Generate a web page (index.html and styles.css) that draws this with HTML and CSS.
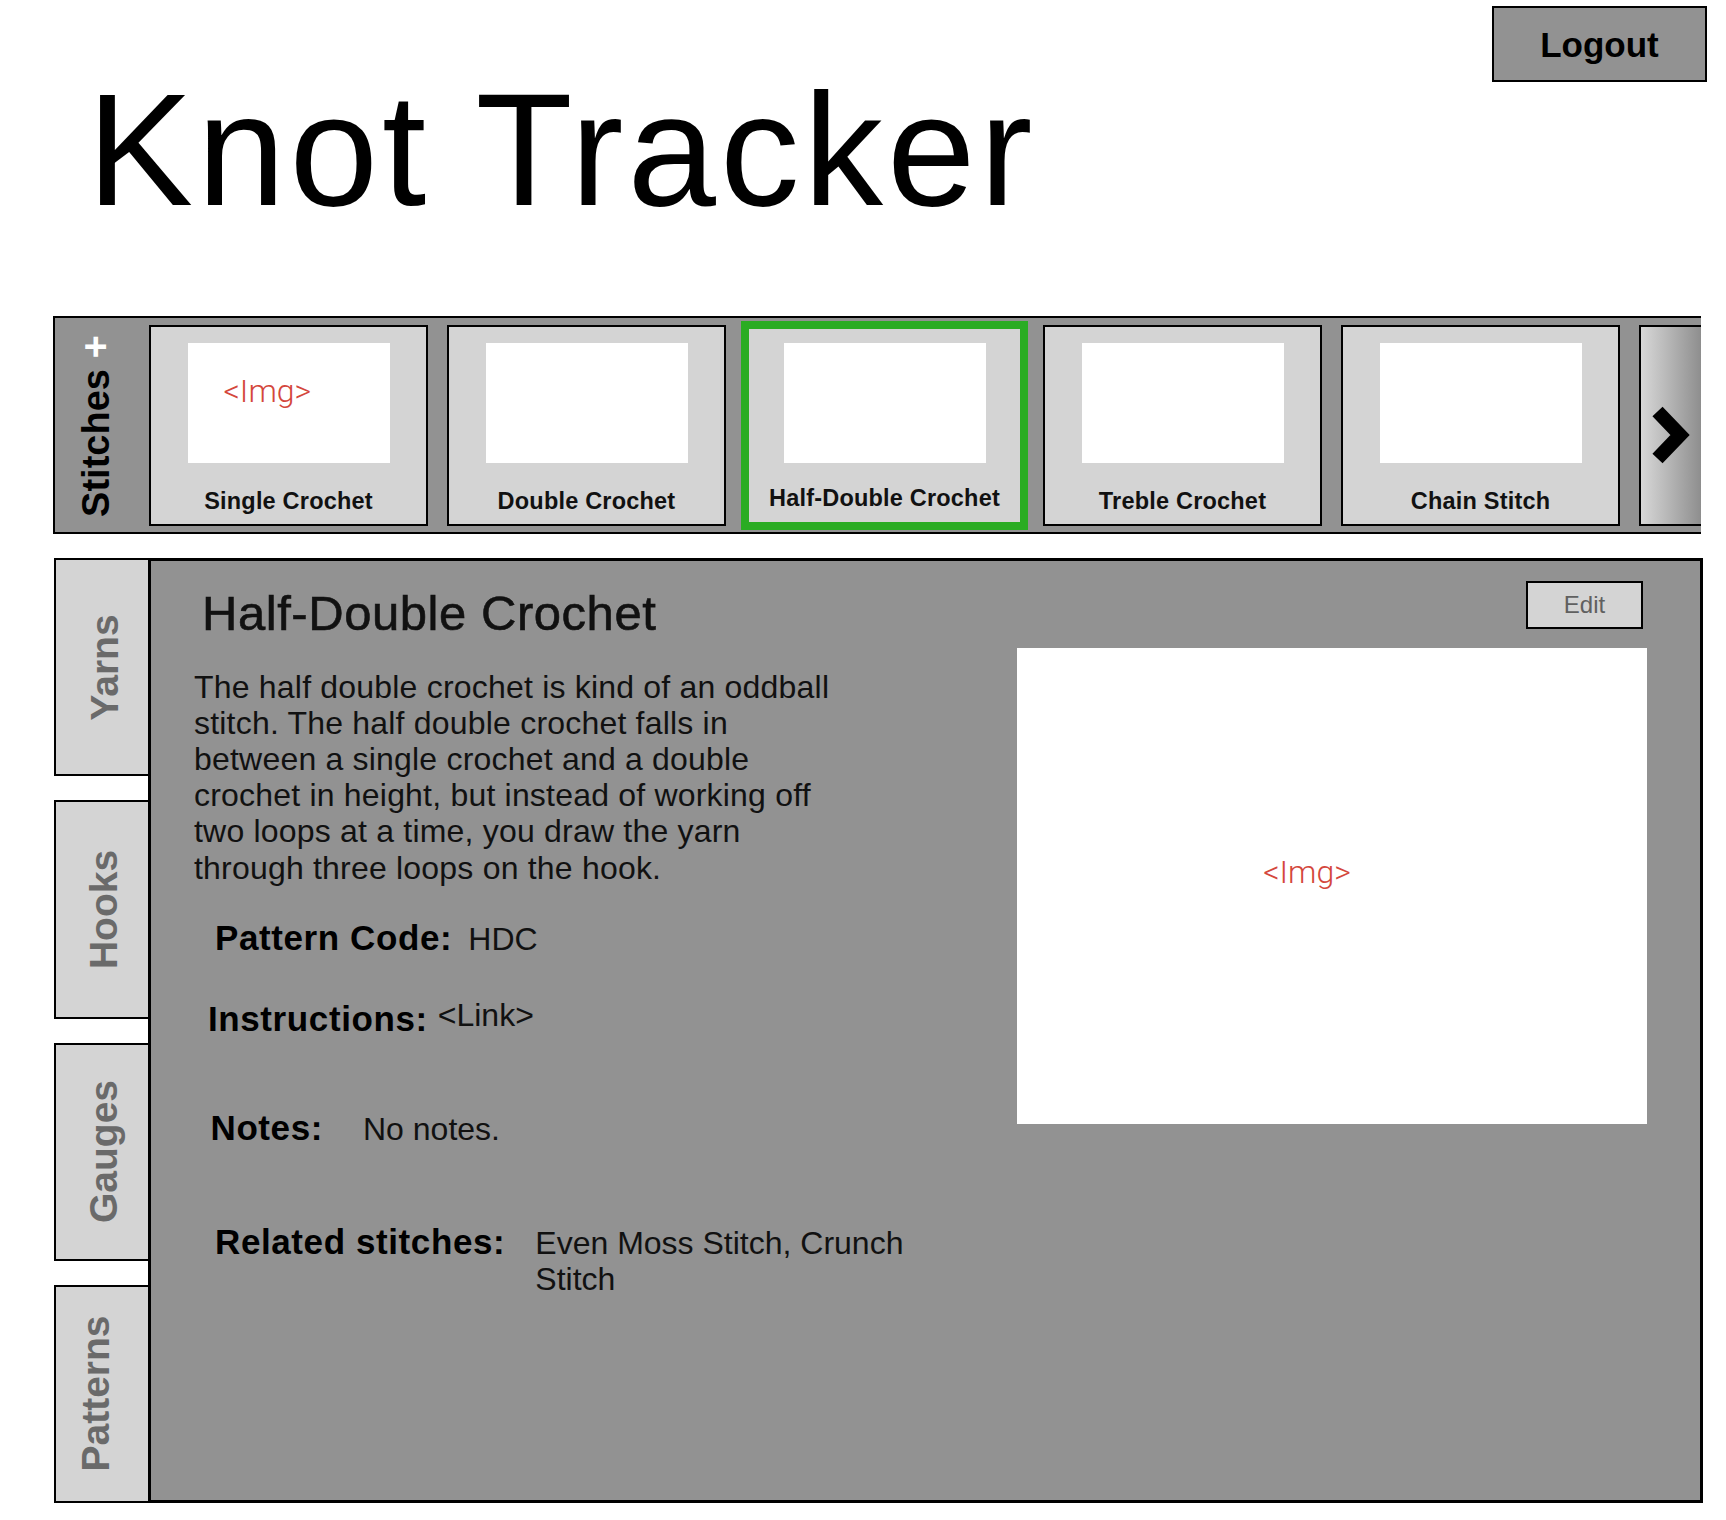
FILE: index.html
```html
<!DOCTYPE html>
<html lang="en">
<head>
<meta charset="utf-8">
<title>Knot Tracker</title>
<link rel="stylesheet" href="styles.css">
</head>
<body>
<header class="masthead">
  <h1 class="brand">Knot Tracker</h1>
  <button class="logout">Logout</button>
</header>

<section class="stitch-bar">
  <div class="bar-title"><span class="bar-title-text">Stitches <span class="add">+</span></span></div>
  <div class="track">
    <div class="card">
      <div class="thumb thumb--label"><span class="ph">&lt;Img&gt;</span></div>
      <div class="card-label">Single Crochet</div>
    </div>
    <div class="card">
      <div class="thumb"></div>
      <div class="card-label">Double Crochet</div>
    </div>
    <div class="card card--selected">
      <div class="thumb"></div>
      <div class="card-label">Half-Double Crochet</div>
    </div>
    <div class="card">
      <div class="thumb"></div>
      <div class="card-label">Treble Crochet</div>
    </div>
    <div class="card">
      <div class="thumb"></div>
      <div class="card-label">Chain Stitch</div>
    </div>
    <button class="next" aria-label="Next">
      <svg viewBox="0 0 60 197" width="60" height="197"><polyline points="16.5,84.5 39,108 16.5,131.5" fill="none" stroke="#000" stroke-width="14" stroke-linejoin="miter" stroke-linecap="butt"/></svg>
    </button>
  </div>
</section>

<main class="workspace">
  <nav class="tabs">
    <div class="tab"><span class="tab-label">Yarns</span></div>
    <div class="tab"><span class="tab-label">Hooks</span></div>
    <div class="tab"><span class="tab-label">Gauges</span></div>
    <div class="tab tab--patterns"><span class="tab-label">Patterns</span></div>
  </nav>
  <article class="panel">
    <div class="detail">
      <h2 class="detail-title">Half-Double Crochet</h2>
      <p class="detail-desc">The half double crochet is kind of an oddball stitch. The half double crochet falls in between a single crochet and a double crochet in height, but instead of working off two loops at a time, you draw the yarn through three loops on the hook.</p>
      <div class="field field--code"><span class="field-label">Pattern Code:</span><span class="field-value">HDC</span></div>
      <div class="field field--instr"><span class="field-label">Instructions:</span><span class="field-value"><span class="raised">&lt;Link&gt;</span></span></div>
      <div class="field field--notes"><span class="field-label">Notes:</span><span class="field-value">No notes.</span></div>
      <div class="field field--related"><span class="field-label">Related stitches:</span><span class="field-value">Even Moss Stitch, Crunch Stitch</span></div>
    </div>
    <div class="media">
      <button class="edit">Edit</button>
      <div class="photo"><span class="ph">&lt;Img&gt;</span></div>
    </div>
  </article>
</main>
</body>
</html>
```

FILE: styles.css
```css
body {
  margin: 0;
  background: #fff;
  color: #000;
  font-family: "Liberation Sans", Arial, sans-serif;
}

button {
  font-family: "Liberation Sans", Arial, sans-serif;
  padding: 0;
  cursor: pointer;
}

/* header */
.masthead {
  display: flex;
  justify-content: space-between;
  align-items: flex-start;
}
.brand {
  margin: 71px 0 0 87px;
  font-size: 159px;
  line-height: 159px;
  font-weight: 400;
  letter-spacing: 4px;
}
.logout {
  margin: 6px 19px 0 0;
  width: 215px;
  height: 76px;
  box-sizing: border-box;
  border: 2px solid #000;
  background: #929292;
  color: #000;
  font-size: 35px;
  font-weight: bold;
  line-height: 1;
}

/* stitch carousel */
.stitch-bar {
  margin: 86px 0 0 53px;
  width: 1648px;
  height: 218px;
  box-sizing: border-box;
  border: 2px solid #000;
  border-right: 0;
  background: #929292;
  display: flex;
  align-items: flex-start;
  padding-top: 7px;
  overflow: hidden;
}
.bar-title {
  width: 94px;
  height: 201px;
  flex-shrink: 0;
  box-sizing: border-box;
  padding-right: 14px;
  display: flex;
  align-items: center;
  justify-content: center;
}
.bar-title-text {
  flex-shrink: 0;
  transform: rotate(-90deg);
  white-space: nowrap;
  font-size: 38px;
  font-weight: bold;
  line-height: 1;
}
.add {
  color: #fff;
  font-size: 40px;
}
.track {
  display: flex;
  align-items: flex-start;
  gap: 19px;
}
.card {
  width: 279px;
  height: 201px;
  flex-shrink: 0;
  box-sizing: border-box;
  border: 2px solid #000;
  background: #d4d4d4;
  display: flex;
  flex-direction: column;
  align-items: center;
}
.card--selected {
  border-color: #2aac23;
  box-shadow: 0 0 0 4px #2aac23, inset 0 0 0 2px #2aac23;
}
.thumb {
  width: 202px;
  height: 120px;
  margin-top: 16px;
  box-sizing: border-box;
  background: #fff;
}
.thumb--label {
  padding: 32px 0 0 36px;
}
.card-label {
  margin-top: 24px;
  font-size: 23.5px;
  line-height: 28px;
  font-weight: bold;
  letter-spacing: 0.2px;
  color: #111;
  white-space: nowrap;
}
.card--selected .card-label {
  margin-top: 21px;
}
.ph {
  font-family: Roboto, "Liberation Sans", sans-serif;
  font-weight: 300;
  font-size: 32px;
  line-height: 1;
  color: #d4473c;
  white-space: nowrap;
}
.next {
  width: 62px;
  height: 201px;
  flex-shrink: 0;
  box-sizing: border-box;
  border: 2px solid #000;
  border-right: 0;
  background: linear-gradient(to right, #d8d8d8, #8e8e8e);
  display: block;
}
.next svg {
  display: block;
}

/* lower workspace */
.workspace {
  margin: 24px 0 0 54px;
  width: 1649px;
  height: 945px;
  display: flex;
}
.tabs {
  width: 94px;
  flex-shrink: 0;
  display: flex;
  flex-direction: column;
  gap: 24px;
}
.tab {
  flex: 1;
  border: 2px solid #000;
  border-right: 0;
  background: #d4d4d4;
  display: flex;
  align-items: center;
  justify-content: center;
  padding-left: 4px;
}
.tab--patterns {
  padding-left: 0;
  padding-right: 13px;
}
.tab-label {
  flex-shrink: 0;
  transform: rotate(-90deg);
  white-space: nowrap;
  font-size: 39px;
  font-weight: bold;
  line-height: 1;
  color: #6a6a6a;
}
.panel {
  flex: 1;
  box-sizing: border-box;
  border: 3px solid #000;
  background: #929292;
  display: flex;
}
.detail {
  flex: 1;
  padding: 24px 0 0 43px;
  color: #111;
}
.detail-title {
  margin: 0 0 27.5px 8px;
  font-size: 49px;
  line-height: 56px;
  font-weight: 400;
  letter-spacing: 0.55px;
  -webkit-text-stroke: 0.6px #111;
}
.detail-desc {
  margin: 0;
  width: 648px;
  font-size: 32px;
  line-height: 36.2px;
  letter-spacing: 0.2px;
}
.field {
  display: flex;
  align-items: baseline;
  line-height: 40px;
}
.field-label {
  font-size: 35px;
  font-weight: bold;
  letter-spacing: 0.6px;
  color: #000;
  white-space: nowrap;
}
.field-value {
  font-size: 32px;
}
.field--code {
  margin: 32.7px 0 0 21px;
  gap: 16px;
}
.field--instr {
  margin: 35.8px 0 0 14px;
  gap: 10px;
}
.field--notes {
  margin: 67.3px 0 0 16.5px;
  gap: 40px;
}
.field--related {
  margin: 73.4px 0 0 21px;
  gap: 30px;
}
.field--related .field-value {
  width: 400px;
  line-height: 36px;
}
.raised {
  vertical-align: 5px;
}
.media {
  width: 683px;
  flex-shrink: 0;
  box-sizing: border-box;
  padding: 20px 53px 0 0;
  display: flex;
  flex-direction: column;
  align-items: flex-end;
}
.edit {
  width: 117px;
  height: 48px;
  margin-right: 4px;
  box-sizing: border-box;
  border: 2px solid #000;
  background: #d4d4d4;
  color: #606060;
  font-size: 24px;
  line-height: 1;
}
.photo {
  width: 630px;
  height: 476px;
  margin-top: 19px;
  box-sizing: border-box;
  padding: 0 50px 28px 0;
  background: #fff;
  display: flex;
  align-items: center;
  justify-content: center;
}
```
